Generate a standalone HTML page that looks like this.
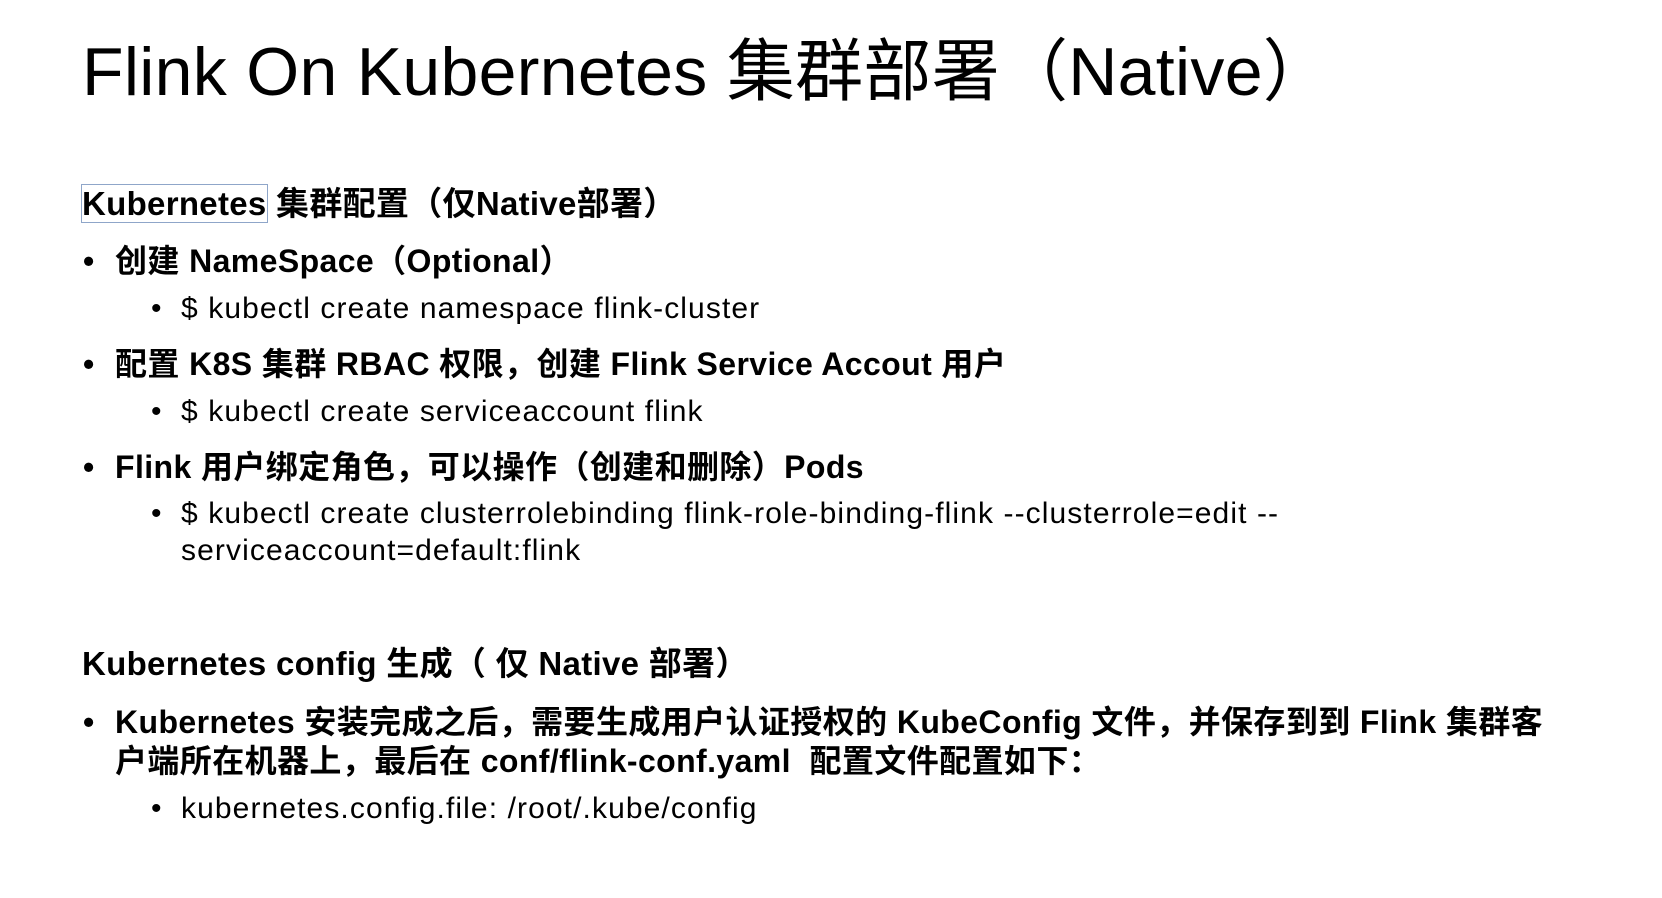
<!DOCTYPE html>
<html><head><meta charset="utf-8"><style>
body{margin:0;width:1662px;height:898px;background:#fff;overflow:hidden;font-family:"Liberation Sans","Noto Sans CJK SC",sans-serif;color:#000}
.l{position:absolute;white-space:nowrap;line-height:1}
.t{left:82px;top:38px;font-size:68px;letter-spacing:0.3px}
.h{left:82px;font-size:33px;font-weight:bold;letter-spacing:0.3px}
.b{left:115px;font-size:32px;font-weight:bold;letter-spacing:0.4px}
.s{left:181px;font-size:30px;letter-spacing:1.1px}
.b::before,.s::before{content:"•";position:absolute;left:-32px}
.s::before{left:-30px}
.n::before{content:none}
.kb{outline:1px solid #8fa6c9}
</style></head><body>
<div class="l t">Flink On Kubernetes 集群部署（Native）</div>
<div class="l h" style="top:187px"><span class="kb">Kubernetes</span> 集群配置（仅Native部署）</div>
<div class="l b" style="top:245px">创建 NameSpace（Optional）</div>
<div class="l s" style="top:294px">$ kubectl create namespace flink-cluster</div>
<div class="l b" style="top:348px">配置 K8S 集群 RBAC 权限，创建 Flink Service Accout 用户</div>
<div class="l s" style="top:397px">$ kubectl create serviceaccount flink</div>
<div class="l b" style="top:451px">Flink 用户绑定角色，可以操作（创建和删除）Pods</div>
<div class="l s" style="top:499px">$ kubectl create clusterrolebinding flink-role-binding-flink --clusterrole=edit --</div>
<div class="l s n" style="top:536px">serviceaccount=default:flink</div>
<div class="l h" style="top:647px">Kubernetes config 生成（ 仅 Native 部署）</div>
<div class="l b" style="top:706px">Kubernetes 安装完成之后，需要生成用户认证授权的 KubeConfig 文件，并保存到到 Flink 集群客</div>
<div class="l b n" style="top:745px">户端所在机器上，最后在 conf/flink-conf.yaml&nbsp; 配置文件配置如下：</div>
<div class="l s" style="top:794px">kubernetes.config.file: /root/.kube/config</div>
</body></html>
